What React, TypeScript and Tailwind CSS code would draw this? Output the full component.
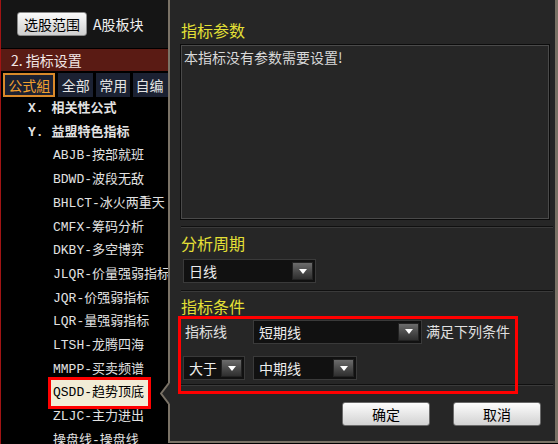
import React from "react";

const items = [
  "ABJB-按部就班",
  "BDWD-波段无敌",
  "BHLCT-冰火两重天",
  "CMFX-筹码分析",
  "DKBY-多空博弈",
  "JLQR-价量强弱指标",
  "JQR-价强弱指标",
  "LQR-量强弱指标",
  "LTSH-龙腾四海",
  "MMPP-买卖频谱",
  "QSDD-趋势顶底",
  "ZLJC-主力进出",
  "操盘线-操盘线",
];

function Tri() {
  return (
    <svg width="8" height="5" viewBox="0 0 8 5">
      <path d="M0 0H8L4 5Z" fill="#ffffff" />
    </svg>
  );
}

function Select({ label, cls }: { label: string; cls: string }) {
  return (
    <div className={"flex items-center h-[24px] border border-[#3a3a3a] bg-[#111111] p-[2px] " + cls}>
      <div className="flex-1 pl-[3px] text-[14px] leading-none text-[#ececec]">{label}</div>
      <div className="h-full w-[21px] flex items-center justify-center bg-linear-to-b from-[#6c6c6c] to-[#2f2f2f] border border-[#222]">
        <Tri />
      </div>
    </div>
  );
}

function Sep({ cls }: { cls: string }) {
  return <div className={"h-[2px] shrink-0 border-t border-[#101010] border-b border-b-[#3a3a3a] " + cls} />;
}

export default function App() {
  return (
    <div className="w-[558px] h-[444px] overflow-hidden bg-black flex font-['Noto_Sans_CJK_SC',sans-serif]">
      {/* Left panel */}
      <div className="w-[168px] shrink-0 h-full border-l border-[#a01414] overflow-hidden whitespace-nowrap">
        <div className="h-[48px] bg-[#151515] flex items-center pl-[16px] gap-[6px]">
          <div className="w-[70px] h-[24px] flex items-center justify-center rounded-[3px] border border-[#8a8a8a] bg-linear-to-b from-[#fafafa] to-[#cfcfcf] text-[14px] text-black">
            选股范围
          </div>
          <div className="text-[14px] text-[#f0f0f0]">A股板块</div>
        </div>
        <div className="mt-[1px] h-[22px] bg-[#5a1b14] flex items-center pl-[10px] text-[14px] text-[#f2e8e6]">
          2. 指标设置
        </div>
        <div className="mt-[2px] h-[24px] flex gap-[3px] pl-[2px]">
          <div className="w-[56px] h-full flex items-center justify-center border-2 border-[#d9892a] bg-[#1b2132] text-[14px] text-[#f0a030]">
            公式組
          </div>
          <div className="w-[37px] h-full flex items-center justify-center bg-[#1b2132] text-[14px] text-[#e4e4e4]">全部</div>
          <div className="w-[37px] h-full flex items-center justify-center bg-[#1b2132] text-[14px] text-[#e4e4e4]">常用</div>
          <div className="w-[37px] h-full flex items-center pl-[2px] bg-[#1b2132] text-[14px] text-[#e4e4e4]">自编</div>
        </div>
        <div className="font-['Liberation_Mono','Noto_Sans_CJK_SC',monospace] text-[13px] text-[#e2e2e2]">
          <div className="h-[23.7px] flex items-center pl-[27px] font-bold">X. 相关性公式</div>
          <div className="h-[23.7px] flex items-center pl-[27px] font-bold">Y. 益盟特色指标</div>
          {items.map((t) => (
            <div key={t} className="h-[23.7px] flex items-center pl-[52px]">
              {t === "QSDD-趋势顶底" ? (
                <span className="relative text-black">
                  <span className="absolute -left-[5px] -right-[7px] -top-[6px] -bottom-[6px] border-[3px] border-[#ff0000] bg-[#f1ecd6]" />
                  <span className="relative">{t}</span>
                </span>
              ) : (
                t
              )}
            </div>
          ))}
        </div>
      </div>

      {/* Popup */}
      <div className="relative w-[390px] h-[443px] bg-[#262626] border-l-2 border-r-[3px] border-b-2 border-[#7a7266] pl-[11px] pr-[2px] flex flex-col">
        <svg className="absolute -left-[10px] top-[383px]" width="12" height="21" viewBox="0 0 12 21">
          <path d="M12 0H9L1 10.5L9 21H12Z" fill="#262626" />
          <path d="M9 0L1 10.5L9 21" fill="none" stroke="#7a7266" strokeWidth="2" />
        </svg>

        <div className="mt-[18px] h-[24px] flex items-center text-[16px] text-[#e4e036]">指标参数</div>
        <div className="mt-[3px] w-[368px] h-[174px] shrink-0 border border-[#4a4a4a] shadow-[0_0_0_1px_#0c0c0c] px-[2px] pt-[1px] text-[14px] text-[#d8d8d8]">
          本指标没有参数需要设置!
        </div>
        <Sep cls="mt-[7px]" />
        <div className="mt-[3px] h-[24px] flex items-center text-[16px] text-[#e4e036]">分析周期</div>
        <Select label="日线" cls="mt-[4px] ml-[2px] w-[133px]" />
        <Sep cls="mt-[7px]" />
        <div className="mt-[4px] h-[20px] flex items-center text-[16px] text-[#e4e036]">指标条件</div>

        <div className="mt-[4px] flex items-center h-[23px]">
          <div className="w-[72px] pl-[4px] text-[14px] text-[#e0e0e0]">指标线</div>
          <Select label="短期线" cls="w-[169px]" />
          <div className="ml-[4px] text-[14px] text-[#e0e0e0]">满足下列条件</div>
        </div>
        <div className="mt-[13px] flex items-center h-[24px]">
          <Select label="大于" cls="ml-[2px] w-[62px]" />
          <Select label="中期线" cls="ml-[8px] w-[104px]" />
        </div>
        <Sep cls="mt-[4px]" />

        <div className="mt-[16px] flex justify-end gap-[23px] pr-[12px]">
          <div className="w-[88px] h-[24px] flex items-center justify-center rounded-[3px] border border-[#6a6a6a] bg-linear-to-b from-[#fdfdfd] to-[#d2d2d2] text-[14px] text-black">
            确定
          </div>
          <div className="w-[88px] h-[24px] flex items-center justify-center rounded-[3px] border border-[#6a6a6a] bg-linear-to-b from-[#fdfdfd] to-[#d2d2d2] text-[14px] text-black">
            取消
          </div>
        </div>

        <div className="absolute left-[8px] top-[316px] w-[340px] h-[78px] border-[3px] border-[#ff0000] pointer-events-none" />
      </div>
    </div>
  );
}
